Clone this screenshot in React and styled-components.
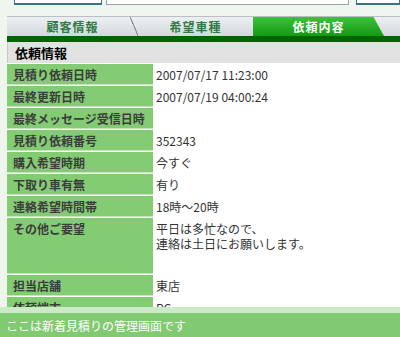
import React from 'react';
import styled, { createGlobalStyle } from 'styled-components';

const GlobalStyle = createGlobalStyle`
  html, body {
    margin: 0;
    padding: 0;
    background: #eef6ee;
    font-family: "Noto Sans CJK JP", "Noto Sans", sans-serif;
    font-size: 12px;
  }
`;

const Page = styled.div`
  width: 400px;
  height: 337px;
  display: flex;
  flex-direction: column;
  overflow: hidden;
`;

const TopBar = styled.div`
  height: 16px;
  display: flex;
  align-items: flex-start;
  padding-left: 14px;
  gap: 4px;
  box-sizing: border-box;
`;

const TopBox = styled.div`
  width: ${p => p.w}px;
  height: 5px;
  margin-left: ${p => p.ml || 0}px;
  background: #fff;
  border: 1px solid ${p => (p.dark ? '#3d7284' : '#9aa4a8')};
  border-top: none;
  border-bottom-width: ${p => (p.dark ? 2 : 1)}px;
  box-sizing: border-box;
`;

const Main = styled.div`
  flex: 1;
  overflow: hidden;
  padding-left: 7px;
`;

const Tabs = styled.div`
  display: flex;
  height: 19px;
  background: linear-gradient(#edf0f2, #d2d8dc);
  border-top: 1px solid #b8c0c4;
`;

const Tab = styled.div`
  width: ${p => p.w}px;
  position: relative;
  display: flex;
  align-items: center;
  justify-content: center;
  font-weight: bold;
  font-size: 12px;
  letter-spacing: 1px;
  color: ${p => (p.active ? '#fff' : '#2f7a45')};
  background: ${p => (p.active ? 'linear-gradient(#3cc23c, #139a13)' : 'transparent')};
  clip-path: ${p => (p.active ? 'polygon(0 0, 92% 0, 100% 100%, 0 100%)' : 'none')};
`;

const Slash = styled.span`
  position: absolute;
  right: 0;
  top: 0;
  width: 8px;
  height: 19px;
  background: linear-gradient(to top right, transparent 46%, #8a9296 48%, #8a9296 54%, transparent 56%);
`;

const GreenBar = styled.div`
  height: 6px;
  background: #006400;
`;

const SectionHead = styled.div`
  height: 21px;
  background: #e2e2e2;
  border-left: 1px solid #c8c8c8;
  display: flex;
  align-items: center;
  padding-left: 7px;
  font-size: 13px;
  font-weight: bold;
  color: #000;
`;

const Table = styled.div`
  display: grid;
  grid-template-columns: 146px 1fr;
  row-gap: 1px;
  background: #fff;
  padding-top: 1px;
`;

const Label = styled.div`
  background: #84cc74;
  color: #3c3c3c;
  font-weight: bold;
  min-height: ${p => p.h || 21}px;
  padding: 3px 0 0 6px;
  box-sizing: border-box;
  line-height: 15px;
  border-bottom: 1px solid #c4e6bc;
`;

const Value = styled.div`
  background: #fff;
  color: #333;
  min-height: ${p => p.h || 21}px;
  padding: 3px 0 0 3px;
  box-sizing: border-box;
  line-height: 15px;
  white-space: pre-line;
`;

const Footer = styled.div`
  height: 24px;
  border-top: 6px solid #cdeac6;
  background: #82ca72;
  color: #fff;
  display: flex;
  align-items: center;
  padding-left: 6px;
  font-size: 12px;
`;

const rows = [
  ['見積り依頼日時', '2007/07/17 11:23:00'],
  ['最終更新日時', '2007/07/19 04:00:24'],
  ['最終メッセージ受信日時', ''],
  ['見積り依頼番号', '352343'],
  ['購入希望時期', '今すぐ'],
  ['下取り車有無', '有り'],
  ['連絡希望時間帯', '18時〜20時'],
  ['その他ご要望', '平日は多忙なので、\n連絡は土日にお願いします。', 56],
  ['担当店舗', '東店'],
  ['依頼端末', 'PC'],
];

export default function App() {
  return (
    <Page>
      <GlobalStyle />
      <TopBar>
        <TopBox w={88} dark />
        <TopBox w={244} />
        <TopBox w={44} ml={3} dark />
      </TopBar>
      <Main>
        <Tabs>
          <Tab w={131}>顧客情報<Slash /></Tab>
          <Tab w={115}>希望車種</Tab>
          <Tab w={131} active>依頼内容</Tab>
        </Tabs>
        <GreenBar />
        <SectionHead>依頼情報</SectionHead>
        <Table>
          {rows.map(([l, v, h]) => (
            <React.Fragment key={l}>
              <Label h={h}>{l}</Label>
              <Value h={h}>{v}</Value>
            </React.Fragment>
          ))}
        </Table>
      </Main>
      <Footer>ここは新着見積りの管理画面です</Footer>
    </Page>
  );
}
